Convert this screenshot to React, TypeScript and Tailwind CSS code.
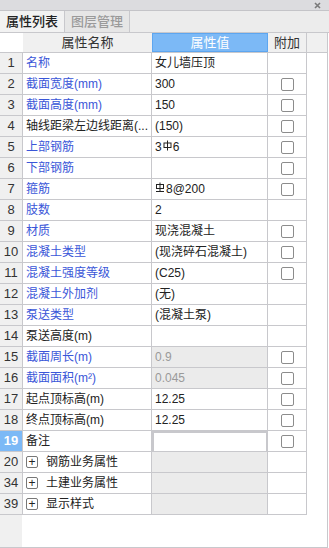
import React from "react";

type Row = {
  no: number;
  name: string;
  value?: React.ReactNode;
  blue?: boolean;
  check?: boolean;
  disabled?: boolean;
  selected?: boolean;
  group?: boolean;
};

function Hpb() {
  return (
    <svg width="9" height="11" viewBox="0 0 9 11" className="inline-block mx-[1px] -mt-[3px]">
      <rect x="1" y="3" width="7" height="4.5" fill="none" stroke="#222" strokeWidth="1" />
      <line x1="4.5" y1="0.5" x2="4.5" y2="10.5" stroke="#222" strokeWidth="1" />
    </svg>
  );
}

function Hrb() {
  return (
    <svg width="10" height="11" viewBox="0 0 10 11" className="inline-block mr-[1px] -mt-[3px]">
      <rect x="1.5" y="2.5" width="7" height="4" fill="none" stroke="#222" strokeWidth="1" />
      <line x1="5" y1="0.5" x2="5" y2="9" stroke="#222" strokeWidth="1" />
      <line x1="1" y1="9.5" x2="9" y2="9.5" stroke="#222" strokeWidth="1" />
    </svg>
  );
}

const rows: Row[] = [
  { no: 1, name: "名称", value: "女儿墙压顶", blue: true },
  { no: 2, name: "截面宽度(mm)", value: "300", blue: true, check: true },
  { no: 3, name: "截面高度(mm)", value: "150", blue: true, check: true },
  { no: 4, name: "轴线距梁左边线距离(...", value: "(150)", check: true },
  { no: 5, name: "上部钢筋", value: <>3<Hpb />6</>, blue: true, check: true },
  { no: 6, name: "下部钢筋", value: "", blue: true, check: true },
  { no: 7, name: "箍筋", value: <><Hrb />8@200</>, blue: true, check: true },
  { no: 8, name: "肢数", value: "2", blue: true },
  { no: 9, name: "材质", value: "现浇混凝土", blue: true, check: true },
  { no: 10, name: "混凝土类型", value: "(现浇碎石混凝土)", blue: true, check: true },
  { no: 11, name: "混凝土强度等级", value: "(C25)", blue: true, check: true },
  { no: 12, name: "混凝土外加剂", value: "(无)", blue: true },
  { no: 13, name: "泵送类型", value: "(混凝土泵)", blue: true },
  { no: 14, name: "泵送高度(m)", value: "" },
  { no: 15, name: "截面周长(m)", value: "0.9", blue: true, check: true, disabled: true },
  { no: 16, name: "截面面积(m²)", value: "0.045", blue: true, check: true, disabled: true },
  { no: 17, name: "起点顶标高(m)", value: "12.25", check: true },
  { no: 18, name: "终点顶标高(m)", value: "12.25", check: true },
  { no: 19, name: "备注", value: "", check: true, selected: true },
  { no: 20, name: "钢筋业务属性", group: true },
  { no: 34, name: "土建业务属性", group: true },
  { no: 39, name: "显示样式", group: true },
];

function Check() {
  return <div className="w-[13px] h-[13px] rounded-[2px] border border-[#8c8c8c] bg-white" />;
}

export default function App() {
  return (
    <div className="w-[329px] h-[548px] bg-white flex flex-col overflow-hidden font-['Liberation_Sans','Noto_Sans_CJK_SC',sans-serif] text-[12px] text-[#222]">
      {/* title bar */}
      <div className="h-[11px] bg-[#dcdcdf] border-b border-[#c4c4c8] flex items-center justify-end pr-[8px]">
        <svg width="7" height="7" viewBox="0 0 7 7">
          <path d="M1 1L6 6M6 1L1 6" stroke="#7a7a7a" strokeWidth="1.6" />
        </svg>
      </div>
      {/* tabs */}
      <div className="h-[22px] bg-[#ececec] border-b border-[#c8c8cc] flex">
        <div className="w-[65px] flex items-center justify-center bg-[#f2f2f2] border-r border-[#c8c8cc] text-[#222] text-[13px] font-medium">
          属性列表
        </div>
        <div className="w-[65px] flex items-center justify-center bg-[#e6e6e6] border-r border-[#c8c8cc] text-[#9a9a9a] text-[13px] font-medium">
          图层管理
        </div>
      </div>
      {/* grid area */}
      <div className="flex-1 flex flex-col w-[328px] border-r border-b border-[#c8c8cc]">
        <div className="flex h-[20px] border-b border-[#c8c8cc]">
          <div className="w-[23px] bg-white" />
          <div className="w-[129px] bg-[#f0f0f0] flex items-center justify-center text-[#333] text-[13px]">属性名称</div>
          <div className="w-[116px] bg-[#7cb9f6] border border-[#5da6f0] flex items-center justify-center text-white text-[13px]">属性值</div>
          <div className="w-[39px] bg-[#f0f0f0] border-r border-[#c8c8cc] flex items-center justify-center text-[#333] text-[13px]">附加</div>
          <div className="flex-1 bg-[#f0f0f0]" />
        </div>
        {rows.map((r) => (
          <div key={r.no} className="flex h-[21px]">
            <div
              className={`w-[23px] border-r border-b border-[#c8c8cc] flex items-center justify-center text-[13px] ${
                r.selected ? "bg-[#7cb9f6] text-white font-bold" : "bg-[#f0f0f0] text-[#333]"
              }`}
            >
              {r.no}
            </div>
            <div
              className={`w-[129px] border-r border-b border-[#c8c8cc] flex items-center pl-[3px] whitespace-nowrap overflow-hidden ${
                r.blue ? "text-[#3a56d8]" : "text-[#222]"
              }`}
            >
              {r.group ? (
                <>
                  <span className="w-[12px] h-[12px] rounded-[2px] border border-[#777] flex items-center justify-center text-[12px] leading-none text-[#222] mr-[8px]">
                    +
                  </span>
                  {r.name}
                </>
              ) : (
                r.name
              )}
            </div>
            <div
              className={`w-[116px] border-b border-[#c8c8cc] flex items-center whitespace-nowrap ${
                r.selected
                  ? "border-2 border-[#7a7a7a] pl-[2px]"
                  : r.disabled || r.group
                  ? "border-r bg-[#ebebeb] text-[#9a9a9a] pl-[3px]"
                  : "border-r pl-[3px]"
              }`}
            >
              {r.value}
            </div>
            <div className="w-[39px] border-r border-b border-[#c8c8cc] flex items-center justify-center">
              {r.check && <Check />}
            </div>
          </div>
        ))}
        <div className="flex-1 flex">
          <div className="w-[22px] bg-[#f0f0f0]" />
        </div>
      </div>
    </div>
  );
}
